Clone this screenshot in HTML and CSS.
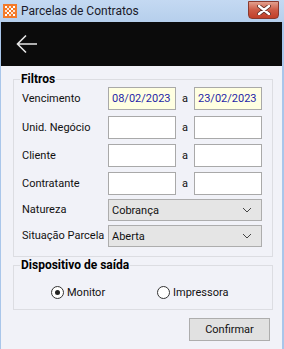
FILE: index.html
```html
<!DOCTYPE html>
<html lang="pt-BR">
<head>
  <meta charset="UTF-8">
  <title>Parcelas de Contratos</title>
  <link rel="stylesheet" href="styles.css">
</head>
<body>

  <div class="window">
    <div class="titlebar">
      <svg class="app-icon" width="16" height="16" viewBox="0 0 16 16">
        <rect x="1" y="1" width="14" height="14" fill="#f47a2a"/>
        <rect x="3" y="3" width="2" height="2" fill="#fff"/>
        <rect x="7" y="3" width="2" height="2" fill="#fde3cf"/>
        <rect x="11" y="3" width="2" height="2" fill="#fff"/>
        <rect x="5" y="5" width="2" height="2" fill="#fde3cf"/>
        <rect x="9" y="5" width="2" height="2" fill="#fff"/>
        <rect x="3" y="7" width="2" height="2" fill="#fde3cf"/>
        <rect x="7" y="7" width="2" height="2" fill="#fff"/>
        <rect x="11" y="7" width="2" height="2" fill="#fde3cf"/>
        <rect x="5" y="9" width="2" height="2" fill="#fff"/>
        <rect x="9" y="9" width="2" height="2" fill="#fde3cf"/>
        <rect x="3" y="11" width="2" height="2" fill="#fff"/>
        <rect x="7" y="11" width="2" height="2" fill="#fde3cf"/>
        <rect x="11" y="11" width="2" height="2" fill="#fff"/>
      </svg>
      <span class="title">Parcelas de Contratos</span>
      <button class="close-btn" aria-label="Fechar">
        <svg width="14" height="10" viewBox="0 0 14 10">
          <path d="M2 1 L12 9 M12 1 L2 9" stroke="#5a2a22" stroke-width="4" stroke-linecap="round"/>
          <path d="M2 1 L12 9 M12 1 L2 9" stroke="#fff" stroke-width="2.4" stroke-linecap="round"/>
        </svg>
      </button>
    </div>

    <div class="toolbar">
      <svg class="back" width="22" height="20" viewBox="0 0 22 20">
        <path d="M21 10 H2 M10 1.5 L1.5 10 L10 18.5" fill="none" stroke="#e6e6e6" stroke-width="1.6"/>
      </svg>
    </div>

    <div class="content">
      <fieldset class="group">
        <legend>Filtros</legend>
        <div class="filters">
          <label>Vencimento</label>
          <input type="text" class="field date" value="08/02/2023">
          <span class="sep">a</span>
          <input type="text" class="field date" value="23/02/2023">

          <label>Unid. Negócio</label>
          <input type="text" class="field">
          <span class="sep">a</span>
          <input type="text" class="field">

          <label>Cliente</label>
          <input type="text" class="field">
          <span class="sep">a</span>
          <input type="text" class="field">

          <label>Contratante</label>
          <input type="text" class="field">
          <span class="sep">a</span>
          <input type="text" class="field">

          <label class="short">Natureza</label>
          <div class="select">
            <select><option>Cobrança</option></select>
            <svg class="chev" width="10" height="6" viewBox="0 0 10 6"><path d="M1 1 L5 5 L9 1" fill="none" stroke="#444" stroke-width="1"/></svg>
          </div>

          <label class="short">Situação Parcela</label>
          <div class="select">
            <select><option>Aberta</option></select>
            <svg class="chev" width="10" height="6" viewBox="0 0 10 6"><path d="M1 1 L5 5 L9 1" fill="none" stroke="#444" stroke-width="1"/></svg>
          </div>
        </div>
      </fieldset>

      <fieldset class="group output">
        <legend>Dispositivo de saída</legend>
        <div class="radios">
          <label class="radio first"><input type="radio" name="out" checked> Monitor</label>
          <label class="radio"><input type="radio" name="out"> Impressora</label>
        </div>
      </fieldset>

      <div class="actions">
        <button class="confirm-btn">Confirmar</button>
      </div>
    </div>
  </div>

</body>
</html>
```

FILE: styles.css
```css
body {
  margin: 0;
  font-family: Roboto, "Noto Sans", sans-serif;
  font-size: 11px;
  color: #111;
}
.window {
  width: 281px;
  height: 349px;
  border-left: 1px solid #a9c6ea;
  border-right: 2px solid #a9c6ea;
  background: #f1f2f8;
  display: flex;
  flex-direction: column;
}
.titlebar {
  height: 22px;
  display: flex;
  align-items: center;
  background: linear-gradient(#c4d9f2, #b6cfec);
  margin-left: -1px;
  margin-right: -2px;
  padding-left: 2px;
}
.app-icon {
  margin-right: 3px;
}
.title {
  font-size: 12px;
  color: #1a1a2a;
  flex: 1;
}
.close-btn {
  width: 31px;
  height: 18px;
  margin: 0 5px 3px 0;
  padding: 0;
  border: 1px solid #8a3a2e;
  border-radius: 0 0 4px 4px;
  background: linear-gradient(#e2a08e, #cd5a44 50%, #c13f28);
  display: flex;
  align-items: center;
  justify-content: center;
}
.toolbar {
  height: 44px;
  background: #0b0b0b;
  display: flex;
  align-items: center;
  padding-left: 15px;
}
.content {
  padding: 5px 9px 0 12px;
}
.group {
  margin: 0;
  padding: 0 9px 9px 8px;
  border: 1px solid #dcdde2;
}
.group legend {
  font-size: 12px;
  font-weight: bold;
  padding: 0 1px;
  margin-left: -2px;
  line-height: 16px;
  color: #000;
}
.filters {
  display: grid;
  grid-template-columns: 86px 68px 18px 68px;
  grid-template-rows: 29px 28px 28px 27px 26px 22px;
  align-items: start;
}
.filters label,
.sep {
  line-height: 23px;
  white-space: nowrap;
}
.filters label.short {
  line-height: 22px;
}
.field {
  display: block;
  box-sizing: border-box;
  width: 68px;
  height: 23px;
  border: 1px solid #a9a9a9;
  background: #fff;
  font: inherit;
  padding: 0 3px;
  margin: 0;
}
.field.date {
  background: #ffffe1;
  color: #1f1fa8;
}
.sep {
  text-align: center;
}
.select {
  grid-column: 2 / 5;
  position: relative;
}
.select select {
  display: block;
  appearance: none;
  width: 100%;
  height: 22px;
  box-sizing: border-box;
  border: 1px solid #adadad;
  border-radius: 0;
  background: #e5e5e5;
  font: inherit;
  color: #111;
  padding: 0 3px;
  margin: 0;
}
.chev {
  position: absolute;
  right: 10px;
  top: 8px;
}
.radios {
  display: flex;
  height: 16px;
  padding: 11px 0 0 29px;
}
.radio {
  display: flex;
  align-items: center;
}
.radio.first {
  width: 106px;
}
.radio input {
  appearance: none;
  width: 13px;
  height: 13px;
  margin: 0 3px 0 0;
  border: 1px solid #333;
  border-radius: 50%;
  background: #fff;
  display: grid;
  place-items: center;
}
.radio input:checked::after {
  content: "";
  width: 5px;
  height: 5px;
  border-radius: 50%;
  background: #222;
}
.actions {
  display: flex;
  justify-content: flex-end;
  padding: 8px 3px 0 0;
}
.confirm-btn {
  width: 81px;
  height: 23px;
  border: 1px solid #adadad;
  background: #e1e1e1;
  font: inherit;
  color: #111;
}
```
